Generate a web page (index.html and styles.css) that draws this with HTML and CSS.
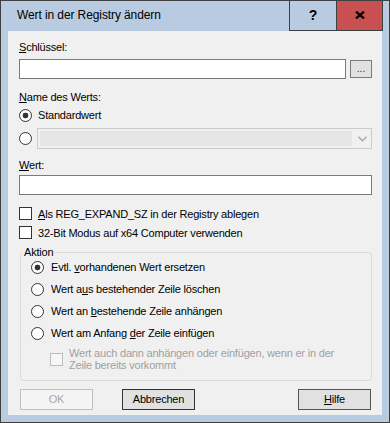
FILE: index.html
```html
<!DOCTYPE html>
<html lang="de">
  <head>
    <meta charset="UTF-8" />
    <meta name="viewport" content="width=device-width, initial-scale=1.0" />
    <title>Wert in der Registry ändern</title>
    <link rel="stylesheet" href="styles.css">
  </head>
  <body>
    <div class="window">
      <div class="titlebar">
        <span class="title">Wert in der Registry ändern</span>
        <div class="caption-buttons">
          <div class="cap-btn help">?</div>
          <div class="cap-btn close">
            <svg width="10" height="8" viewBox="0 0 10 8">
              <path d="M1 0.6 L9 7.4 M9 0.6 L1 7.4" stroke="#000" stroke-width="2.2" fill="none" />
            </svg>
          </div>
        </div>
      </div>

      <div class="client">
        <div class="label"><u>S</u>chlüssel:</div>
        <div class="key-row">
          <div class="textbox key-box"></div>
          <div class="browse">...</div>
        </div>

        <div class="label name-label"><u>N</u>ame des Werts:</div>
        <div class="radio-row std-row">
          <span class="radio checked"></span>
          <span>Standardwert</span>
        </div>
        <div class="radio-row name-row">
          <span class="radio"></span>
          <div class="combo">
            <div class="combo-field"></div>
            <svg class="chevron" width="9" height="6" viewBox="0 0 9 6">
              <path d="M0.5 0.8 L4.5 4.8 L8.5 0.8" stroke="#a6a6a6" stroke-width="1.4" fill="none" />
            </svg>
          </div>
        </div>

        <div class="label value-label"><u>W</u>ert:</div>
        <div class="textbox value-box"></div>

        <div class="check-row first-check">
          <span class="check"></span>
          <span><u>A</u>ls REG_EXPAND_SZ in der Registry ablegen</span>
        </div>
        <div class="check-row">
          <span class="check"></span>
          <span>32-Bit Modus auf x64 Computer verwenden</span>
        </div>

        <fieldset class="group">
          <legend>Aktion</legend>
          <div class="group-row first-row">
            <span class="radio checked"></span>
            <span>Evtl. <u>v</u>orhandenen Wert ersetzen</span>
          </div>
          <div class="group-row">
            <span class="radio"></span>
            <span>Wert a<u>u</u>s bestehender Zeile löschen</span>
          </div>
          <div class="group-row">
            <span class="radio"></span>
            <span>Wert an <u>b</u>estehende Zeile anhängen</span>
          </div>
          <div class="group-row">
            <span class="radio"></span>
            <span>Wert am Anfang <u>d</u>er Zeile einfügen</span>
          </div>
          <div class="sub-row">
            <span class="check disabled"></span>
            <span class="sub-text">Wert auch dann anhängen oder einfügen, wenn er in der Zeile bereits vorkommt</span>
          </div>
        </fieldset>

        <div class="buttons">
          <div class="btn ok">OK</div>
          <div class="btn cancel">Abbrechen</div>
          <div class="btn helpbtn"><u>H</u>ilfe</div>
        </div>
      </div>
    </div>
  </body>
</html>
```

FILE: styles.css
```css
body {
  margin: 0;
  font-family: "Liberation Sans", Arial, sans-serif;
  font-size: 11px;
  letter-spacing: -0.2px;
  color: #000;
}

.window {
  width: 390px;
  height: 423px;
  box-sizing: border-box;
  border: 1px solid #3f3f3f;
  background-color: #b9cbe0;
  display: flex;
  flex-direction: column;
}

/* title bar */
.titlebar {
  height: 30px;
  display: flex;
  align-items: flex-start;
  flex-shrink: 0;
}

.title {
  padding: 7px 0 0 16px;
  font-size: 12px;
  line-height: 15px;
  letter-spacing: -0.1px;
  flex: 1;
}

.caption-buttons {
  display: flex;
  margin: -1px 6px 0 0;
}

.cap-btn {
  width: 47px;
  height: 31px;
  box-sizing: border-box;
  border: 1px solid #3f3f3f;
  display: flex;
  align-items: center;
  justify-content: center;
}

.help {
  border-right: none;
  font-weight: bold;
  font-size: 14px;
  padding-bottom: 2px;
}

.close {
  background-color: #c75050;
  padding-bottom: 1px;
}

/* client area */
.client {
  flex: 1;
  margin: 0 7px 7px 7px;
  padding: 10px 10px 0 11px;
  background-color: #f0f0f0;
  display: flex;
  flex-direction: column;
}

.label {
  height: 13px;
  line-height: 13px;
}

.name-label {
  margin-top: 12px;
}

.value-label {
  margin-top: 10px;
}

.textbox {
  height: 20px;
  box-sizing: border-box;
  border: 1px solid #7a7a7a;
  background-color: #fff;
}

.key-row {
  display: flex;
  gap: 4px;
  margin-top: 5px;
}

.key-box {
  width: 327px;
}

.browse {
  width: 22px;
  height: 18px;
  margin-top: 1px;
  box-sizing: border-box;
  border: 1px solid #7a7a7a;
  background-color: #e1e1e1;
  text-align: center;
  line-height: 16px;
  font-size: 10px;
  letter-spacing: 0;
  color: #333;
}

.value-box {
  margin-top: 3px;
}

.radio {
  width: 13px;
  height: 13px;
  box-sizing: border-box;
  border: 1px solid #333;
  border-radius: 50%;
  background-color: #fff;
  flex-shrink: 0;
}

.radio.checked {
  background: radial-gradient(circle, #333 2.6px, #fff 3.2px);
}

.radio-row {
  display: flex;
  align-items: center;
}

.std-row {
  height: 16px;
  margin-top: 3px;
  gap: 6px;
}

.name-row {
  height: 21px;
  margin-top: 5px;
  gap: 5px;
}

.combo {
  flex: 1;
  height: 21px;
  box-sizing: border-box;
  border: 1px solid #cccccc;
  padding: 2px;
  display: flex;
  align-items: center;
}

.combo-field {
  width: 312px;
  height: 15px;
  background-color: #e6e6e6;
}

.chevron {
  margin-left: 6px;
}

.check {
  width: 13px;
  height: 13px;
  box-sizing: border-box;
  border: 1px solid #333;
  background-color: #fff;
  flex-shrink: 0;
}

.check.disabled {
  border-color: #bcbcbc;
  background-color: #f7f7f7;
}

.check-row {
  height: 19px;
  display: flex;
  align-items: center;
  gap: 6px;
}

.first-check {
  margin-top: 9px;
}

/* Aktion group */
.group {
  margin: 4px 0 0 1px;
  padding: 0 10px 9px 10px;
  border: 1px solid #dcdcdc;
  border-radius: 3px;
  min-width: 0;
}

.group legend {
  margin-left: -9px;
  padding: 0 2px;
  line-height: 13px;
}

.group-row {
  height: 16px;
  margin-top: 6px;
  display: flex;
  align-items: center;
  gap: 7px;
}

.first-row {
  margin-top: 0;
}

.sub-row {
  margin: 6px 0 0 19px;
  display: flex;
  align-items: center;
  gap: 6px;
}

.sub-text {
  max-width: 285px;
  line-height: 12px;
  color: #a0a0a0;
}

/* bottom buttons */
.buttons {
  display: flex;
  margin-top: 8px;
}

.btn {
  width: 73px;
  height: 21px;
  box-sizing: border-box;
  border: 1px solid #555;
  background-color: #e1e1e1;
  text-align: center;
  line-height: 19px;
}

.ok {
  margin-left: 1px;
  border-color: #bfbfbf;
  background-color: #f4f4f4;
  color: #a8a8a8;
}

.cancel {
  margin-left: 29px;
  border-color: #333;
}

.helpbtn {
  margin-left: auto;
  margin-right: 1px;
}
```
